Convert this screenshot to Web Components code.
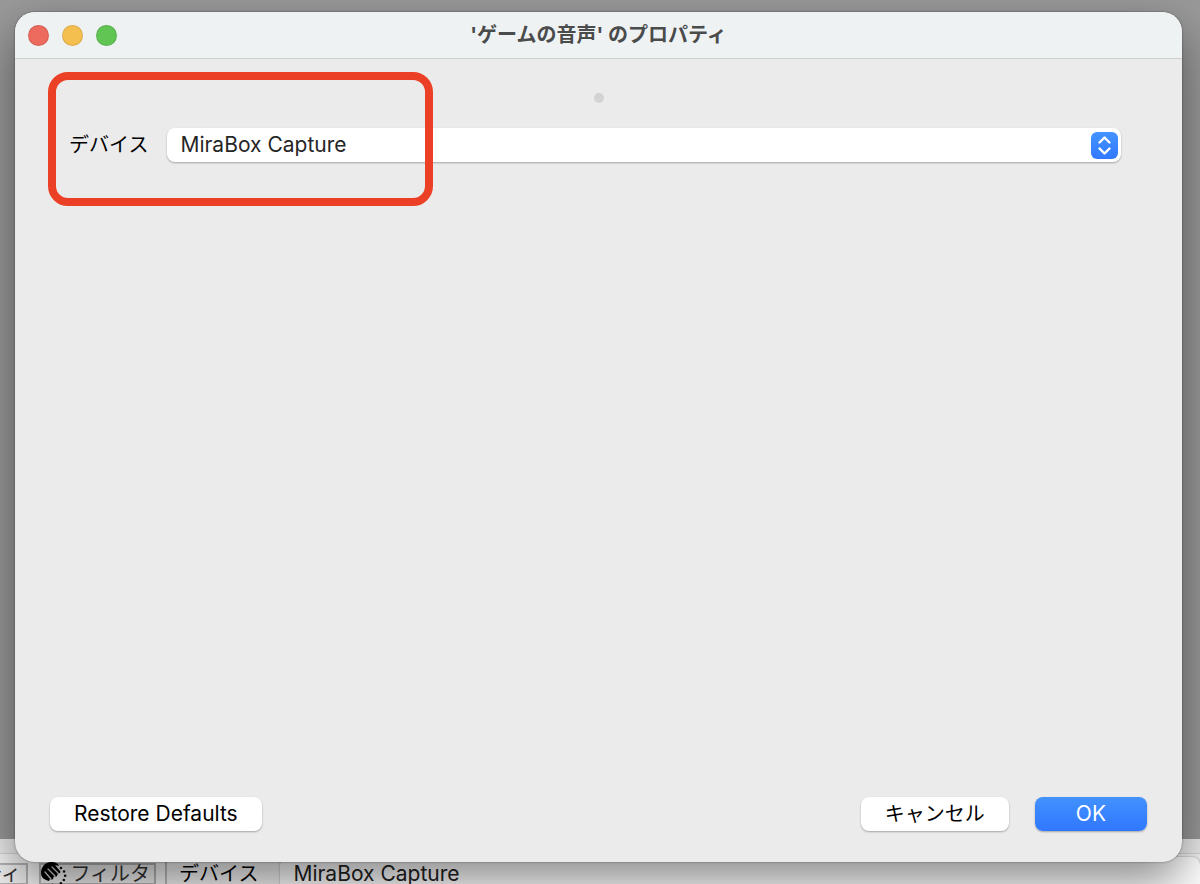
<!DOCTYPE html>
<html lang="ja">
<head>
<meta charset="utf-8">
<title>'ゲームの音声' のプロパティ</title>
<style>
    html, body {
        height: 100%;
        margin: 0;
    }

    body {
        font-family: Inter, "Liberation Sans", "Noto Sans CJK JP", sans-serif;
        font-size: 20px;
        line-height: 24px;
        color: #000;
        overflow: hidden;
    }
</style>
</head>
<body>
<obs-desktop>
    <obs-toolbar slot="toolbar"></obs-toolbar>
    <mac-window slot="window">
        <span slot="title">'ゲームの音声' のプロパティ</span>
        <device-field></device-field>
        <mac-button slot="start">Restore Defaults</mac-button>
        <mac-button slot="end" lang="ja" compact>キャンセル</mac-button>
        <mac-button slot="end" primary>OK</mac-button>
    </mac-window>
</obs-desktop>

<script>
class ObsDesktop extends HTMLElement {
    constructor() {
        super();
        this.attachShadow({ mode: 'open' });
        this.shadowRoot.innerHTML = `
            <style>
                :host {
                    display: flex;
                    flex-direction: column;
                    position: relative;
                    height: 100%;
                    overflow: hidden;
                }

                .preview {
                    flex: 1;
                    background: #999;
                }

                /* the dialog floats over the main window */
                ::slotted([slot="window"]) {
                    position: absolute;
                    inset: 12px 18px 22px 15px;
                }
            </style>
            <div class="preview"></div>
            <slot name="toolbar"></slot>
            <slot name="window"></slot>
        `;
    }
}

class ObsToolbar extends HTMLElement {
    constructor() {
        super();
        this.attachShadow({ mode: 'open' });
        this.shadowRoot.innerHTML = `
            <style>
                :host {
                    display: block;
                    height: 45px;
                    overflow: hidden;
                    background: #f4f4f4;
                    line-height: 20px;
                }

                .edge {
                    height: 15px;
                    box-sizing: border-box;
                    background: #ececec;
                    border-bottom: 1px solid #d4d4d4;
                }

                .row {
                    display: flex;
                    align-items: center;
                    height: 40px;
                }

                button {
                    display: flex;
                    align-items: center;
                    justify-content: flex-end;
                    box-sizing: border-box;
                    height: 22px;
                    padding: 0 5px;
                    border: 2px solid #b4b4b4;
                    background: #eee;
                    color: #333;
                    font: inherit;
                    white-space: nowrap;
                }

                .props {
                    width: 28px;
                    border-left: 0;
                    margin-right: 11px;
                }

                .filter {
                    width: 117px;
                    gap: 2px;
                    padding: 0 4px 0 0;
                    margin-right: 9px;
                }

                .filter svg { flex: none; }

                .device {
                    display: flex;
                    flex: 1;
                    align-items: center;
                    gap: 22px;
                    height: 40px;
                    padding-left: 12px;
                    border-left: 2px solid #bbb;
                }

                select {
                    flex: 1;
                    appearance: none;
                    height: 34px;
                    padding: 0 13px;
                    border: 0;
                    border-radius: 8px;
                    background: #fff;
                    box-shadow: 0 0 2px rgba(0, 0, 0, .4);
                    font: inherit;
                    font-size: 21px;
                    color: #222;
                }
            </style>
            <div class="edge"></div>
            <div class="row">
                <button class="props">ティ</button>
                <button class="filter">
                    <svg width="28" height="26" viewBox="0 0 28 26">
                        <path d="M1 12C1 6 5 1 11 1c4 0 7 1 8 4l-4-1 5 6c1 1 0 3-2 2l-1 3c-1 1-2 1-3 0l-1 3c-1 1-2 1-3 0l-1 2C5 19 1 17 1 12z" fill="#000"/>
                        <path d="M12 6l6 6M8 8l7 7M5 11l6 7" fill="none" stroke="#ccc" stroke-width="1.3" stroke-linecap="round"/>
                        <path d="M21 7q5 4 4 9t-7 8q-4 1-8-1" fill="none" stroke="#111" stroke-width="2.6" stroke-linecap="round" stroke-dasharray="0 4.5"/>
                    </svg>
                    フィルタ
                </button>
                <div class="device">
                    <label for="source">デバイス</label>
                    <select id="source"><option>MiraBox Capture</option></select>
                </div>
            </div>
        `;
    }
}

class MacWindow extends HTMLElement {
    constructor() {
        super();
        this.attachShadow({ mode: 'open' });
        this.shadowRoot.innerHTML = `
            <style>
                :host {
                    display: flex;
                    flex-direction: column;
                    border-radius: 20px;
                    background: #ebebeb;
                    box-shadow: 0 0 2px rgba(0, 0, 0, .5), 0 20px 48px rgba(0, 0, 0, .46);
                    overflow: hidden;
                }

                header {
                    display: grid;
                    grid-template-columns: 1fr auto 1fr;
                    align-items: center;
                    height: 46px;
                    padding: 0 13px;
                    background: #eef2f3;
                    border-bottom: 1px solid #d0d0d0;
                }

                .lights {
                    display: flex;
                    gap: 13px;
                }

                .lights button {
                    width: 21px;
                    height: 21px;
                    padding: 0;
                    border: 1px solid rgba(0, 0, 0, .1);
                    border-radius: 50%;
                }

                .close { background: #ed6a5e; }
                .minimize { background: #f5bf4f; }
                .zoom { background: #61c554; }

                h1 {
                    margin: 0;
                    font-size: 20px;
                    font-weight: bold;
                    color: #4a4b4b;
                }

                main {
                    flex: 1;
                    padding: 34px 35px 0;
                }

                .handle {
                    width: 10px;
                    height: 10px;
                    margin: 0 auto 25px;
                    border-radius: 50%;
                    background: #d3d3d3;
                }

                footer {
                    display: flex;
                    gap: 26px;
                    padding: 0 35px 31px;
                }

                .space { flex: 1; }
            </style>
            <header>
                <div class="lights">
                    <button class="close" aria-label="閉じる"></button>
                    <button class="minimize" aria-label="しまう"></button>
                    <button class="zoom" aria-label="拡大"></button>
                </div>
                <h1><slot name="title"></slot></h1>
            </header>
            <main>
                <div class="handle"></div>
                <slot></slot>
            </main>
            <footer>
                <slot name="start"></slot>
                <div class="space"></div>
                <slot name="end"></slot>
            </footer>
        `;
    }
}

class DeviceField extends HTMLElement {
    constructor() {
        super();
        this.attachShadow({ mode: 'open' });
        this.shadowRoot.innerHTML = `
            <style>
                :host {
                    display: flex;
                    align-items: center;
                    gap: 19px;
                    position: relative;
                    padding: 0 26px 0 19px;
                }

                .popup {
                    display: grid;
                    flex: 1;
                    align-items: center;
                }

                select, svg { grid-area: 1 / 1; }

                select {
                    appearance: none;
                    width: 100%;
                    height: 34px;
                    padding: 0 13px;
                    border: 0;
                    border-radius: 8px;
                    background: #fff;
                    box-shadow: 0 1px 2px rgba(0, 0, 0, .3);
                    font: inherit;
                    font-size: 21px;
                    color: #262626;
                }

                svg {
                    justify-self: end;
                    margin-right: 3px;
                    pointer-events: none;
                }

                /* red marker drawn round the field */
                .marker {
                    position: absolute;
                    left: -2px;
                    top: -56px;
                    box-sizing: border-box;
                    width: 385px;
                    height: 134px;
                    border: 8px solid #ec4026;
                    border-radius: 20px;
                    pointer-events: none;
                }
            </style>
            <label for="device">デバイス</label>
            <div class="popup">
                <select id="device"><option>MiraBox Capture</option></select>
                <svg width="27" height="27" viewBox="0 0 27 27">
                    <defs>
                        <linearGradient id="blue" x2="0" y2="1">
                            <stop offset="0" stop-color="#4594ff"/>
                            <stop offset="1" stop-color="#3178ff"/>
                        </linearGradient>
                    </defs>
                    <rect width="27" height="27" rx="6" fill="url(#blue)"/>
                    <path d="M8.5 10.5l5-5 5 5M8.5 16.5l5 5 5-5" fill="none" stroke="#fff" stroke-width="2.4" stroke-linecap="round" stroke-linejoin="round"/>
                </svg>
            </div>
            <div class="marker"></div>
        `;
    }
}

class MacButton extends HTMLElement {
    constructor() {
        super();
        this.attachShadow({ mode: 'open' });
        this.shadowRoot.innerHTML = `
            <style>
                :host { display: block; }

                button {
                    height: 34px;
                    padding: 0 24px;
                    border: 0;
                    border-radius: 8px;
                    background: #fff;
                    box-shadow: 0 1px 2px rgba(0, 0, 0, .3);
                    font: inherit;
                    font-size: 21px;
                    color: #000;
                }

                :host([compact]) button { font-size: 20px; }

                :host([primary]) button {
                    padding: 0 41px;
                    background: linear-gradient(#4292ff, #3077ff);
                    color: #fff;
                }
            </style>
            <button><slot></slot></button>
        `;
    }
}

customElements.define('obs-desktop', ObsDesktop);
customElements.define('obs-toolbar', ObsToolbar);
customElements.define('mac-window', MacWindow);
customElements.define('device-field', DeviceField);
customElements.define('mac-button', MacButton);
</script>
</body>
</html>
